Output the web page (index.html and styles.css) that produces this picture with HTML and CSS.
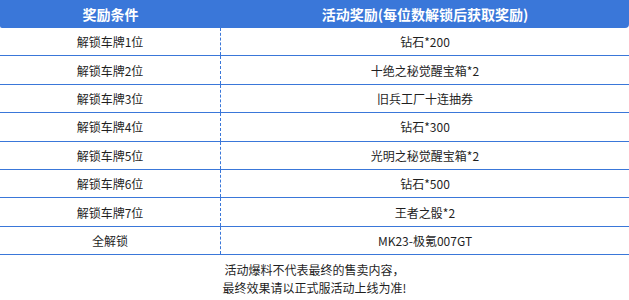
FILE: index.html
```html
<!DOCTYPE html>
<html lang="zh">
<head>
<meta charset="utf-8">
<link rel="stylesheet" href="styles.css">
</head>
<body>
<div class="table">
  <div class="head">
    <div class="hcell c1">奖励条件</div>
    <div class="hcell c2">活动奖励(每位数解锁后获取奖励)</div>
  </div>
  <div class="row"><div class="cell c1">解锁车牌1位</div><div class="cell c2">钻石*200</div></div>
  <div class="row"><div class="cell c1">解锁车牌2位</div><div class="cell c2">十绝之秘觉醒宝箱*2</div></div>
  <div class="row"><div class="cell c1">解锁车牌3位</div><div class="cell c2">旧兵工厂十连抽券</div></div>
  <div class="row"><div class="cell c1">解锁车牌4位</div><div class="cell c2">钻石*300</div></div>
  <div class="row"><div class="cell c1">解锁车牌5位</div><div class="cell c2">光明之秘觉醒宝箱*2</div></div>
  <div class="row"><div class="cell c1">解锁车牌6位</div><div class="cell c2">钻石*500</div></div>
  <div class="row"><div class="cell c1">解锁车牌7位</div><div class="cell c2">王者之骰*2</div></div>
  <div class="row"><div class="cell c1">全解锁</div><div class="cell c2">MK23-极氪007GT</div></div>
</div>
<div class="note">
  <p>活动爆料不代表最终的售卖内容，</p>
  <p>最终效果请以正式服活动上线为准!</p>
</div>
</body>
</html>
```

FILE: styles.css
```css
* { box-sizing: border-box; }
body {
  margin: 0;
  width: 629px;
  height: 300px;
  overflow: hidden;
  background: #fff;
  font-family: "Noto Sans CJK SC", "Noto Sans", sans-serif;
  color: #1f1f1f;
}
.table { width: 629px; }
.head {
  display: grid;
  grid-template-columns: 221px 1fr;
  height: 28px;
  background: #3a77d9;
  border-radius: 0 0 4px 2px;
}
.hcell {
  display: flex;
  align-items: center;
  justify-content: center;
  color: #fff;
  font-weight: bold;
  font-size: 14px;
}
.row {
  display: grid;
  grid-template-columns: 221px 1fr;
  height: 28.4px;
  border-bottom: 1px solid #3a77d9;
}
.cell {
  display: flex;
  align-items: center;
  justify-content: center;
  font-size: 12px;
}
.cell.c1 { border-right: 1px dashed #3a77d9; }
.note {
  padding-top: 6px;
  text-align: center;
  font-size: 12px;
  line-height: 18px;
}
.note p { margin: 0; }
```
